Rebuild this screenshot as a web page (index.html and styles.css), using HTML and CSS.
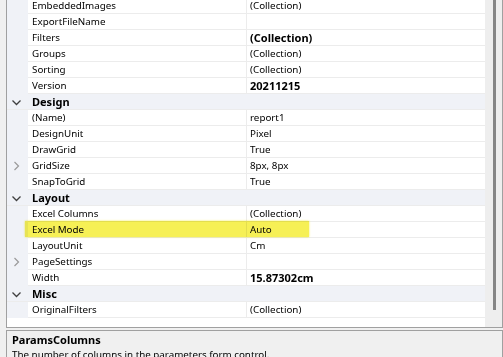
FILE: index.html
```html
<!DOCTYPE html>
<html>
<head>
<meta charset="utf-8">
<link rel="stylesheet" href="styles.css">
</head>
<body>
<div class="window">
  <div class="grid">
    <div class="rows">
      <div class="row"><div class="gut"></div><div class="name">EmbeddedImages</div><div class="val">(Collection)</div></div>
      <div class="row"><div class="gut"></div><div class="name">ExportFileName</div><div class="val"></div></div>
      <div class="row"><div class="gut"></div><div class="name">Filters</div><div class="val bold">(Collection)</div></div>
      <div class="row"><div class="gut"></div><div class="name">Groups</div><div class="val">(Collection)</div></div>
      <div class="row"><div class="gut"></div><div class="name">Sorting</div><div class="val">(Collection)</div></div>
      <div class="row"><div class="gut"></div><div class="name">Version</div><div class="val bold">20211215</div></div>
      <div class="cat"><div class="gut"><svg class="chev" width="21" height="15" viewBox="0 0 21 15"><path d="M5.5 6.5 L9.5 10.5 L13.5 6.5"/></svg></div><div class="catname">Design</div></div>
      <div class="row"><div class="gut"></div><div class="name">(Name)</div><div class="val">report1</div></div>
      <div class="row"><div class="gut"></div><div class="name">DesignUnit</div><div class="val">Pixel</div></div>
      <div class="row"><div class="gut"></div><div class="name">DrawGrid</div><div class="val">True</div></div>
      <div class="row"><div class="gut"><svg class="exp" width="21" height="15" viewBox="0 0 21 15"><path d="M7.5 4 L11.5 8 L7.5 12"/></svg></div><div class="name">GridSize</div><div class="val">8px, 8px</div></div>
      <div class="row"><div class="gut"></div><div class="name">SnapToGrid</div><div class="val">True</div></div>
      <div class="cat"><div class="gut"><svg class="chev" width="21" height="15" viewBox="0 0 21 15"><path d="M5.5 6.5 L9.5 10.5 L13.5 6.5"/></svg></div><div class="catname">Layout</div></div>
      <div class="row"><div class="gut"></div><div class="name">Excel Columns</div><div class="val">(Collection)</div></div>
      <div class="row"><div class="gut"></div><div class="name">Excel Mode</div><div class="val">Auto</div></div>
      <div class="row"><div class="gut"></div><div class="name">LayoutUnit</div><div class="val">Cm</div></div>
      <div class="row"><div class="gut"><svg class="exp" width="21" height="15" viewBox="0 0 21 15"><path d="M7.5 4 L11.5 8 L7.5 12"/></svg></div><div class="name">PageSettings</div><div class="val"></div></div>
      <div class="row"><div class="gut"></div><div class="name">Width</div><div class="val bold">15.87302cm</div></div>
      <div class="cat"><div class="gut"><svg class="chev" width="21" height="15" viewBox="0 0 21 15"><path d="M5.5 6.5 L9.5 10.5 L13.5 6.5"/></svg></div><div class="catname">Misc</div></div>
      <div class="row"><div class="gut"></div><div class="name">OriginalFilters</div><div class="val">(Collection)</div></div>
    </div>
    <div class="scrollbar"><div class="thumb"></div></div>
  </div>
  <div class="desc">
    <div class="desc-title">ParamsColumns</div>
    <div class="desc-text">The number of columns in the parameters form control.</div>
  </div>
  <div class="highlight"></div>
</div>
</body>
</html>
```
FILE: styles.css
```css
html, body {
  margin: 0;
  padding: 0;
}
body {
  background: #f0f0f0;
  font-family: "Noto Sans", "Liberation Sans", sans-serif;
  font-size: 9.8px;
  color: #000;
}
.window {
  position: relative;
  width: 503px;
  height: 357px;
  overflow: hidden;
}
.grid {
  margin-left: 6px;
  width: 495px;
  height: 327px;
  border: 1px solid #a0a0a0;
  border-top: none;
  background: #fff;
  display: flex;
  overflow: hidden;
}
.rows {
  width: 478px;
  margin-top: -2px;
  display: flex;
  flex-direction: column;
}
.row {
  display: grid;
  grid-template-columns: 21px 218px 1fr;
  height: 16px;
  flex: none;
}
.gut {
  background: #f0f2f7;
  height: 16px;
}
.name, .val {
  height: 15px;
  line-height: 16px;
  border-bottom: 1px solid #ececec;
  white-space: nowrap;
  overflow: hidden;
}
.name {
  padding-left: 4px;
}
.val {
  border-left: 1px solid #ececec;
  padding-left: 3px;
}
.bold {
  font-weight: 700;
  font-size: 11px;
}
.cat {
  display: grid;
  grid-template-columns: 21px 1fr;
  height: 15px;
  border-bottom: 1px solid #ececec;
  background: #f0f2f7;
  flex: none;
}
.cat .gut {
  height: 15px;
}
.catname {
  padding-left: 4px;
  line-height: 16px;
  font-size: 11px;
  font-weight: 700;
}
.chev, .exp {
  display: block;
}
.chev path {
  fill: none;
  stroke: #404040;
  stroke-width: 1.3;
}
.exp path {
  fill: none;
  stroke: #9a9a9a;
  stroke-width: 1.2;
}
.scrollbar {
  width: 17px;
  background: #eeeeee;
}
.thumb {
  margin-left: 8px;
  width: 3px;
  height: 310px;
  background: #868686;
}
.desc {
  margin-top: 2px;
  margin-left: 6px;
  width: 490px;
  height: 40px;
  border: 1px solid #a0a0a0;
  background: #f0f0f0;
  padding: 2px 0 0 5px;
}
.desc-title {
  font-weight: 700;
  font-size: 11px;
  line-height: 14px;
}
.desc-text {
  margin-top: 1px;
  line-height: 14px;
  white-space: nowrap;
}
.highlight {
  position: absolute;
  left: 25px;
  top: 221px;
  width: 284px;
  height: 16px;
  background: #f6f055;
  mix-blend-mode: multiply;
  box-shadow: 0 0 2px #f6f055;
}
```
